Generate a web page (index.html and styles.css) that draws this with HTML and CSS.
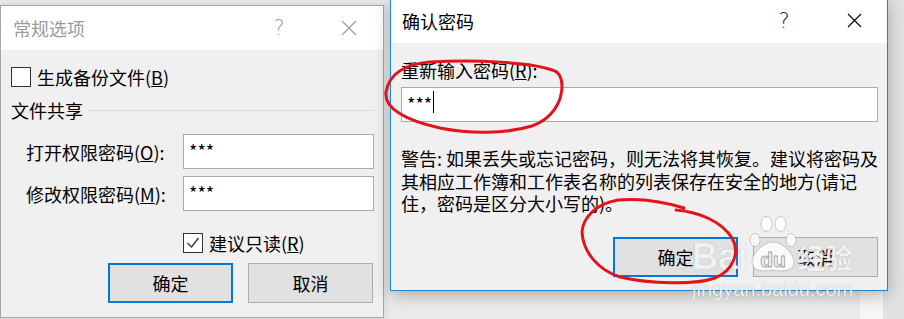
FILE: index.html
```html
<!DOCTYPE html>
<html lang="zh-CN">
<head>
  <meta charset="UTF-8" />
  <title>常规选项 / 确认密码</title>
  <link rel="stylesheet" href="styles.css">
</head>
<body>
  <section class="dialog dialog-general">
    <header class="titlebar">
      <span class="title">常规选项</span>
      <span class="help">?</span>
      <span class="close">
        <svg width="16" height="16" viewBox="0 0 16 16"><path d="M1 1 L15 15 M15 1 L1 15" /></svg>
      </span>
    </header>
    <div class="dialog-body">
      <div class="check-row backup">
        <span class="checkbox"></span>
        <span>生成备份文件(<u>B</u>)</span>
      </div>
      <div class="group-title">
        <span>文件共享</span>
        <span class="rule"></span>
      </div>
      <div class="field-row first">
        <span class="field-label">打开权限密码(<u>O</u>):</span>
        <div class="textbox">***</div>
      </div>
      <div class="field-row">
        <span class="field-label">修改权限密码(<u>M</u>):</span>
        <div class="textbox">***</div>
      </div>
      <div class="check-row readonly">
        <span class="checkbox">
          <svg width="18" height="18" viewBox="0 0 18 18"><path d="M3.5 9 L7.5 13 L14.5 4" /></svg>
        </span>
        <span>建议只读(<u>R</u>)</span>
      </div>
      <div class="actions">
        <button class="btn btn-default">确定</button>
        <button class="btn">取消</button>
      </div>
    </div>
  </section>

  <section class="dialog dialog-confirm">
    <header class="titlebar">
      <span class="title">确认密码</span>
      <span class="help">?</span>
      <span class="close">
        <svg width="15" height="15" viewBox="0 0 15 15"><path d="M1 1 L14 14 M14 1 L1 14" /></svg>
      </span>
    </header>
    <div class="dialog-body">
      <div class="prompt">重新输入密码(<u>R</u>):</div>
      <div class="textbox wide">***<span class="caret"></span></div>
      <p class="warning">警告: 如果丢失或忘记密码，则无法将其恢复。建议将密码及<br>其相应工作簿和工作表名称的列表保存在安全的地方(请记<br>住，密码是区分大小写的)。</p>
      <div class="actions">
        <button class="btn btn-default">确定</button>
        <button class="btn">取消</button>
      </div>
    </div>
  </section>

  <div class="watermark">
    <div class="wm-logo">
      <span class="wm-bai">Bai</span>
      <svg class="wm-paw" width="48" height="58" viewBox="0 0 48 58">
        <g>
          <ellipse cx="6" cy="25" rx="5" ry="6.5" />
          <ellipse cx="17.5" cy="9" rx="5.5" ry="7.5" />
          <ellipse cx="31.5" cy="9" rx="5.5" ry="7.5" />
          <ellipse cx="42" cy="25" rx="5" ry="6.5" />
          <path d="M24 27 C14 27 3 39 3 47 C3 56 13 57 24 55 C35 57 45 56 45 47 C45 39 34 27 24 27 Z" />
        </g>
        <text x="24" y="52" text-anchor="middle">du</text>
      </svg>
      <span class="wm-jy">经验</span>
    </div>
    <div class="wm-url">jingyan.baidu.com</div>
  </div>

  <svg class="ink" width="904" height="319" viewBox="0 0 904 319">
    <path d="M557 72 C535 61 470 60 430 62 C405 64 389 74 386 92 C384 108 405 120 440 128 C470 134 505 134 532 126 C552 119 562 102 562 86 C562 78 560 74 555 71" />
    <path d="M676 210 C700 212 722 222 732 238 C740 252 734 270 715 278 C695 285 650 284 620 277 C598 270 583 252 582 232 C583 218 595 204 618 200 C640 198 665 202 684 208" />
  </svg>
</body>
</html>
```

FILE: styles.css
```css
body {
  margin: 0;
  width: 904px;
  height: 319px;
  overflow: hidden;
  position: relative;
  font-family: "Noto Sans CJK SC", sans-serif;
  font-size: 18px;
  color: #000;
  background: linear-gradient(to right, #ebebeb 0, #ebebeb 860px, #f6f6f6 860px, #f6f6f6 883px, #e2e2e2 883px);
}

/* windows */
.dialog {
  position: absolute;
  box-sizing: border-box;
  display: flex;
  flex-direction: column;
  background: #f0f0f0;
}
.dialog-general {
  left: 0;
  top: 5px;
  width: 384px;
  height: 313px;
  border: 1px solid #a6a6a6;
  box-shadow: 0 0 8px rgba(0,0,0,0.12);
}
.dialog-confirm {
  left: 390px;
  top: -2px;
  width: 498px;
  height: 293px;
  border: 1px solid #1883d7;
  box-shadow: 0 4px 16px rgba(0,0,0,0.28);
}

.titlebar {
  height: 44px;
  flex: none;
  display: flex;
  align-items: center;
  background: #fff;
  padding-left: 12px;
}
.dialog-confirm .titlebar {
  padding-left: 11px;
}
.title {
  flex: 1;
  line-height: 22px;
}
.help {
  width: 20px;
  text-align: center;
  font-family: "DejaVu Sans", sans-serif;
  font-weight: 200;
  font-size: 21px;
  line-height: 22px;
  margin-right: 50px;
}
.close {
  width: 20px;
  height: 16px;
  display: flex;
  justify-content: center;
  margin-right: 24px;
}
.close svg path {
  stroke: #000;
  stroke-width: 1.1;
  fill: none;
}
.dialog-general .title,
.dialog-general .help {
  color: #9a9a9a;
}
.dialog-general .close svg path {
  stroke: #9a9a9a;
}
.dialog-confirm .help {
  color: #222;
}
.dialog-confirm .close {
  margin-right: 23px;
}

.dialog-body {
  flex: 1;
  display: flex;
  flex-direction: column;
  padding: 17px 9px 0 10px;
}
.dialog-confirm .dialog-body {
  padding-top: 16px;
}

/* check boxes */
.check-row {
  display: flex;
  align-items: center;
  height: 20px;
  line-height: 20px;
  gap: 6px;
}
.checkbox {
  box-sizing: border-box;
  width: 20px;
  height: 20px;
  border: 1px solid #333;
  background: #fff;
  display: flex;
  align-items: center;
  justify-content: center;
}
.checkbox svg path {
  fill: none;
  stroke: #333;
  stroke-width: 1.3;
}
.check-row.readonly {
  margin-top: 22px;
  padding-left: 172px;
}

.group-title {
  display: flex;
  align-items: center;
  height: 22px;
  margin-top: 12px;
  gap: 5px;
}
.group-title .rule {
  flex: 1;
  height: 1px;
  background: #dcdcdc;
}

/* text fields */
.field-row {
  display: flex;
  align-items: center;
  margin-top: 7px;
}
.field-row.first {
  margin-top: 13px;
}
.field-label {
  margin-left: 15px;
  line-height: 22px;
}
.textbox {
  box-sizing: border-box;
  width: 191px;
  height: 35px;
  margin-left: auto;
  border: 1px solid #ababab;
  background: #fff;
  padding: 4px 0 0 5px;
  line-height: 22px;
  display: flex;
  align-items: flex-start;
}
.textbox.wide {
  width: 477px;
  margin: 6px 0 0;
}
.caret {
  width: 1px;
  height: 22px;
  margin: -1px 0 0 1px;
  background: #000;
}

.prompt {
  line-height: 22px;
}
.warning {
  margin: 25px 0 0;
  line-height: 22.5px;
  white-space: nowrap;
}

/* buttons */
.actions {
  display: flex;
  justify-content: flex-end;
  gap: 15px;
  margin-top: 10px;
  margin-right: 1px;
}
.dialog-confirm .actions {
  margin-top: 22px;
  margin-right: 0;
}
.btn {
  box-sizing: border-box;
  width: 125px;
  height: 40px;
  font-family: inherit;
  font-size: 18px;
  color: #000;
  background: #e1e1e1;
  border: 1px solid #adadad;
  padding: 0;
}
.btn-default {
  border: 2px solid #0078d7;
}

/* watermark */
.watermark {
  position: absolute;
  left: 692px;
  top: 213px;
  display: flex;
  flex-direction: column;
  color: rgba(255,255,255,0.88);
  text-shadow: 0 0 1px rgba(0,0,0,0.35);
}
.wm-logo {
  display: flex;
  align-items: flex-end;
  height: 60px;
}
.wm-bai {
  font-family: "Liberation Sans", sans-serif;
  font-weight: bold;
  font-size: 36px;
  line-height: 36px;
  margin-bottom: -2px;
}
.wm-paw {
  margin-left: 1px;
}
.wm-paw g {
  fill: rgba(255,255,255,0.85);
  stroke: rgba(0,0,0,0.18);
  stroke-width: 1;
}
.wm-paw text {
  font-family: "Liberation Sans", sans-serif;
  font-weight: bold;
  font-size: 21px;
  fill: rgba(255,255,255,0.9);
  stroke: rgba(0,0,0,0.3);
  stroke-width: 0.8;
}
.wm-jy {
  font-size: 28px;
  line-height: 32px;
  font-weight: bold;
}
.wm-url {
  font-family: "Liberation Sans", sans-serif;
  font-size: 20px;
  line-height: 22px;
  margin-top: 5px;
}

/* red pen marks */
.ink {
  position: absolute;
  left: 0;
  top: 0;
  pointer-events: none;
}
.ink path {
  fill: none;
  stroke: #e3131b;
  stroke-width: 3;
  stroke-linecap: round;
}
```
